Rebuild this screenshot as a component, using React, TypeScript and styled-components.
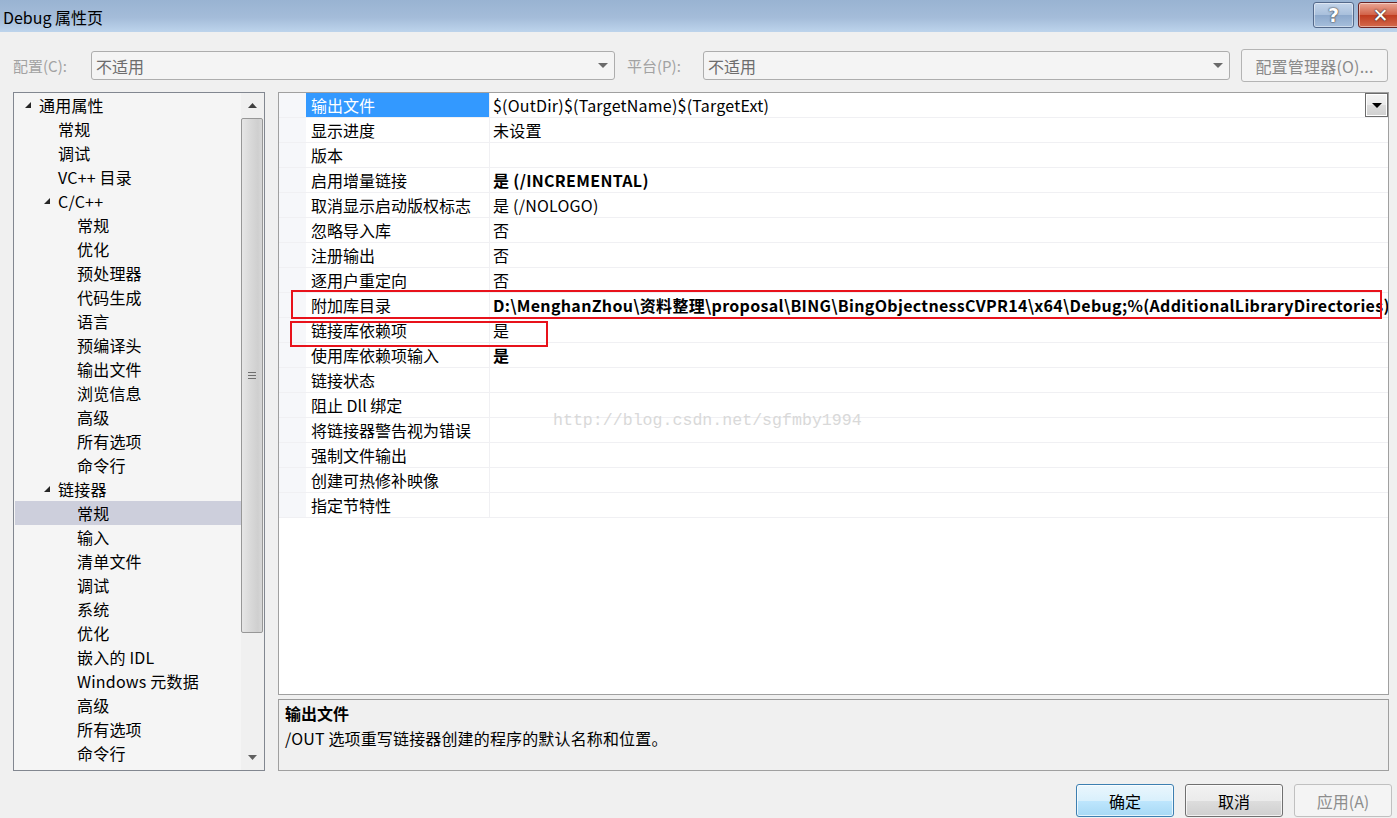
import React from 'react';
import styled, { createGlobalStyle } from 'styled-components';

const GlobalStyle = createGlobalStyle`
  html, body { margin: 0; padding: 0; background: #f0f0f0; }
  body {
    font-family: "Noto Sans CJK SC", "Microsoft YaHei", sans-serif;
    font-size: 16px;
    color: #000;
  }
  * { box-sizing: border-box; }
`;

const Window = styled.div`
  position: relative;
  width: 1397px;
  height: 818px;
  overflow: hidden;
  display: flex;
  flex-direction: column;
  background: #f0f0f0;
`;

const TitleBar = styled.div`
  height: 32px;
  flex: none;
  display: flex;
  align-items: flex-start;
  justify-content: space-between;
  background: linear-gradient(#99b3d2, #a4bcd9 55%, #bdd4ec);
  padding-left: 3px;
`;

const TitleText = styled.div`
  line-height: 34px;
  font-size: 16px;
  color: #000;
`;

const Captions = styled.div`
  display: flex;
  gap: 4px;
  margin-top: 2px;
  margin-right: -6px;
`;

const CaptionButton = styled.div<{ $kind: 'help' | 'close' }>`
  width: ${p => (p.$kind === 'help' ? 41 : 45)}px;
  height: 26px;
  border-radius: 3px;
  border: 1px solid ${p => (p.$kind === 'help' ? '#54698a' : '#6b2424')};
  box-shadow: inset 0 0 0 1px rgba(255,255,255,0.45);
  background: ${p =>
    p.$kind === 'help'
      ? 'linear-gradient(#c4d5ea, #a9c0dc 48%, #8da9cc 52%, #a6bfdc)'
      : 'linear-gradient(#e9a796, #d2644a 48%, #c03c20 52%, #d46a4c)'};
  display: flex;
  align-items: center;
  justify-content: center;
  color: #fff;
  font-family: "DejaVu Sans", sans-serif;
  font-weight: 700;
  font-size: 19px;
  text-shadow: 0 0 2px #333, 0 0 1px #333;
`;

const ConfigRow = styled.div`
  margin-top: 17px;
  height: 33px;
  flex: none;
  display: flex;
  align-items: center;
  padding-left: 13px;
`;

const ConfigLabel = styled.div<{ $w: number; $gap?: number }>`
  width: ${p => p.$w}px;
  margin-left: ${p => p.$gap ?? 0}px;
  color: #a2a2a2;
  font-size: 15px;
`;

const Combo = styled.div<{ $w: number }>`
  width: ${p => p.$w}px;
  height: 29px;
  border: 1px solid #adadad;
  border-radius: 3px;
  background: #f4f4f4;
  display: flex;
  align-items: center;
  justify-content: space-between;
  padding: 0 5px 0 4px;
  color: #6d6d6d;
  font-size: 16px;
`;

const ComboArrow = styled.div`
  width: 0;
  height: 0;
  border-left: 5px solid transparent;
  border-right: 5px solid transparent;
  border-top: 5px solid #6a6a6a;
  margin-right: 1px;
`;

const ManagerButton = styled.div`
  margin-left: 11px;
  width: 147px;
  height: 33px;
  border: 1px solid #b4b4b4;
  border-radius: 3px;
  background: #f4f4f4;
  color: #8a8a8a;
  display: flex;
  align-items: center;
  justify-content: center;
  font-size: 16px;
  letter-spacing: 0.2px;
`;

const Main = styled.div`
  margin-top: 10px;
  display: flex;
  gap: 13px;
  padding-left: 13px;
  flex: none;
`;

const Tree = styled.div`
  width: 252px;
  height: 679px;
  border: 1px solid #828790;
  background: #f5f5f5;
  display: flex;
  overflow: hidden;
`;

const TreeList = styled.div`
  flex: 1;
  padding-left: 1px;
`;

const TreeRow = styled.div<{ $level: number; $selected?: boolean }>`
  height: 24px;
  display: flex;
  align-items: center;
  padding-left: ${p => 8 + p.$level * 19}px;
  background: ${p => (p.$selected ? '#cdcfdc' : 'transparent')};
  white-space: nowrap;
  font-size: 16px;
  letter-spacing: 0.2px;
`;

const ArrowSlot = styled.div`
  width: 16px;
  height: 24px;
  display: flex;
  align-items: center;
  padding-left: 1px;
`;

const ScrollBar = styled.div`
  width: 23px;
  background: #f0f0f0;
  display: flex;
  flex-direction: column;
`;

const ScrollArrow = styled.div`
  height: 25px;
  display: flex;
  align-items: center;
  justify-content: center;
  flex: none;
`;

const ScrollThumb = styled.div`
  height: 515px;
  width: 22px;
  border: 1px solid #979797;
  border-radius: 2px;
  background: linear-gradient(90deg, #e6e6e6, #d8d8d8 45%, #cfcfcf 80%, #d8d8d8);
  display: flex;
  align-items: center;
  justify-content: center;
  flex: none;
`;

const Grip = styled.div`
  width: 8px;
  height: 7px;
  background: repeating-linear-gradient(#6f6f6f 0 1px, transparent 1px 3px);
`;

const ScrollTrack = styled.div`
  flex: 1;
`;

const RightCol = styled.div`
  width: 1111px;
  display: flex;
  flex-direction: column;
`;

const Grid = styled.div`
  position: relative;
  height: 603px;
  border: 1px solid #a0a0a0;
  background: #fff;
  overflow: hidden;
`;

const GridRow = styled.div`
  height: 25px;
  display: flex;
  border-bottom: 1px solid #f0f0f3;
`;

const Gutter = styled.div`
  width: 27px;
  flex: none;
  background: #f6f7fa;
`;

const NameCell = styled.div<{ $selected?: boolean }>`
  width: 184px;
  flex: none;
  padding-left: 5px;
  display: flex;
  align-items: center;
  border-right: 1px solid #f0f0f3;
  background: ${p => (p.$selected ? '#3399ff' : '#fff')};
  color: ${p => (p.$selected ? '#fff' : '#000')};
  white-space: nowrap;
  font-size: 16px;
`;

const ValueCell = styled.div<{ $bold?: boolean }>`
  flex: 1;
  padding-left: 3px;
  display: flex;
  align-items: center;
  justify-content: space-between;
  font-weight: ${p => (p.$bold ? 700 : 400)};
  letter-spacing: ${p => (p.$bold ? 0.32 : 0.22)}px;
  white-space: nowrap;
  overflow: visible;
  font-size: 16px;
`;

const DropButton = styled.div`
  width: 23px;
  height: 24px;
  border: 1px solid #6c6c6c;
  box-shadow: inset 0 0 0 1px #fff;
  background: linear-gradient(#f4f4f4, #ebebeb 50%, #dcdcdc 51%, #d0d0d0);
  display: flex;
  align-items: center;
  justify-content: center;
  flex: none;
`;

const DropTri = styled.div`
  width: 0;
  height: 0;
  border-left: 5px solid transparent;
  border-right: 5px solid transparent;
  border-top: 5px solid #000;
`;

const RedBox = styled.div<{ $l: number; $t: number; $w: number; $h: number }>`
  position: absolute;
  left: ${p => p.$l}px;
  top: ${p => p.$t}px;
  width: ${p => p.$w}px;
  height: ${p => p.$h}px;
  border: 2px solid #e8121b;
  pointer-events: none;
`;

const Watermark = styled.div`
  position: absolute;
  left: 274px;
  top: 318px;
  font-family: "Liberation Mono", "DejaVu Sans Mono", monospace;
  font-size: 16.6px;
  color: #d9d9d9;
  pointer-events: none;
`;

const Desc = styled.div`
  margin-top: 4px;
  height: 72px;
  border: 1px solid #a0a0a0;
  border-top-color: #9a9a9a;
  background: #f0f0f0;
  padding: 1px 6px;
`;

const DescTitle = styled.div`
  font-weight: 700;
  font-size: 16px;
  line-height: 24px;
`;

const DescText = styled.div`
  font-size: 16px;
  line-height: 26px;
  letter-spacing: 0.15px;
`;

const Footer = styled.div`
  margin-top: 13px;
  display: flex;
  justify-content: flex-end;
  gap: 11px;
  padding-right: 5px;
`;

const DialogButton = styled.div<{ $variant: 'primary' | 'normal' | 'disabled' }>`
  width: 98px;
  height: 33px;
  border-radius: 3px;
  display: flex;
  align-items: center;
  justify-content: center;
  font-size: 16px;
  border: 1px solid
    ${p => (p.$variant === 'primary' ? '#3c7fb1' : p.$variant === 'normal' ? '#707070' : '#c0c0c0')};
  box-shadow: ${p => (p.$variant === 'disabled' ? 'none' : 'inset 0 0 0 1px rgba(255,255,255,0.7)')};
  background: ${p =>
    p.$variant === 'primary'
      ? 'linear-gradient(#eaf6fd, #d9f0fc 50%, #bee6fd 51%, #a7d9f5)'
      : p.$variant === 'normal'
      ? 'linear-gradient(#f2f2f2, #ebebeb 50%, #dddddd 51%, #cfcfcf)'
      : '#f4f4f4'};
  color: ${p => (p.$variant === 'disabled' ? '#8d8d8d' : '#000')};
`;

const Tri = () => (
  <svg width="8" height="8" viewBox="0 0 8 8">
    <polygon points="7,1 7,7 1,7" fill="#262626" />
  </svg>
);

const UpTri = () => (
  <svg width="9" height="5" viewBox="0 0 9 5">
    <polygon points="0,5 9,5 4.5,0" fill="#404040" />
  </svg>
);

const DownTri = () => (
  <svg width="9" height="5" viewBox="0 0 9 5">
    <polygon points="0,0 9,0 4.5,5" fill="#606060" />
  </svg>
);

type TreeItem = { label: string; level: number; expanded?: boolean; selected?: boolean };

const treeItems: TreeItem[] = [
  { label: '通用属性', level: 0, expanded: true },
  { label: '常规', level: 1 },
  { label: '调试', level: 1 },
  { label: 'VC++ 目录', level: 1 },
  { label: 'C/C++', level: 1, expanded: true },
  { label: '常规', level: 2 },
  { label: '优化', level: 2 },
  { label: '预处理器', level: 2 },
  { label: '代码生成', level: 2 },
  { label: '语言', level: 2 },
  { label: '预编译头', level: 2 },
  { label: '输出文件', level: 2 },
  { label: '浏览信息', level: 2 },
  { label: '高级', level: 2 },
  { label: '所有选项', level: 2 },
  { label: '命令行', level: 2 },
  { label: '链接器', level: 1, expanded: true },
  { label: '常规', level: 2, selected: true },
  { label: '输入', level: 2 },
  { label: '清单文件', level: 2 },
  { label: '调试', level: 2 },
  { label: '系统', level: 2 },
  { label: '优化', level: 2 },
  { label: '嵌入的 IDL', level: 2 },
  { label: 'Windows 元数据', level: 2 },
  { label: '高级', level: 2 },
  { label: '所有选项', level: 2 },
  { label: '命令行', level: 2 },
];

type Prop = { name: string; value: string; bold?: boolean; selected?: boolean };

const props: Prop[] = [
  { name: '输出文件', value: '$(OutDir)$(TargetName)$(TargetExt)', selected: true },
  { name: '显示进度', value: '未设置' },
  { name: '版本', value: '' },
  { name: '启用增量链接', value: '是 (/INCREMENTAL)', bold: true },
  { name: '取消显示启动版权标志', value: '是 (/NOLOGO)' },
  { name: '忽略导入库', value: '否' },
  { name: '注册输出', value: '否' },
  { name: '逐用户重定向', value: '否' },
  {
    name: '附加库目录',
    value: 'D:\\MenghanZhou\\资料整理\\proposal\\BING\\BingObjectnessCVPR14\\x64\\Debug;%(AdditionalLibraryDirectories)',
    bold: true,
  },
  { name: '链接库依赖项', value: '是' },
  { name: '使用库依赖项输入', value: '是', bold: true },
  { name: '链接状态', value: '' },
  { name: '阻止 Dll 绑定', value: '' },
  { name: '将链接器警告视为错误', value: '' },
  { name: '强制文件输出', value: '' },
  { name: '创建可热修补映像', value: '' },
  { name: '指定节特性', value: '' },
];

export default function App() {
  return (
    <>
      <GlobalStyle />
      <Window>
        <TitleBar>
          <TitleText>Debug 属性页</TitleText>
          <Captions>
            <CaptionButton $kind="help">?</CaptionButton>
            <CaptionButton $kind="close">✕</CaptionButton>
          </Captions>
        </TitleBar>

        <ConfigRow>
          <ConfigLabel $w={78}>配置(C):</ConfigLabel>
          <Combo $w={524}>
            <span>不适用</span>
            <ComboArrow />
          </Combo>
          <ConfigLabel $w={76} $gap={12}>平台(P):</ConfigLabel>
          <Combo $w={527}>
            <span>不适用</span>
            <ComboArrow />
          </Combo>
          <ManagerButton>配置管理器(O)...</ManagerButton>
        </ConfigRow>

        <Main>
          <Tree>
            <TreeList>
              {treeItems.map((it, i) => (
                <TreeRow key={i} $level={it.level} $selected={it.selected}>
                  <ArrowSlot>{it.expanded ? <Tri /> : null}</ArrowSlot>
                  {it.label}
                </TreeRow>
              ))}
            </TreeList>
            <ScrollBar>
              <ScrollArrow>
                <UpTri />
              </ScrollArrow>
              <ScrollThumb>
                <Grip />
              </ScrollThumb>
              <ScrollTrack />
              <ScrollArrow>
                <DownTri />
              </ScrollArrow>
            </ScrollBar>
          </Tree>

          <RightCol>
            <Grid>
              {props.map((p, i) => (
                <GridRow key={i}>
                  <Gutter />
                  <NameCell $selected={p.selected}>{p.name}</NameCell>
                  <ValueCell $bold={p.bold}>
                    <span>{p.value}</span>
                    {p.selected ? (
                      <DropButton>
                        <DropTri />
                      </DropButton>
                    ) : null}
                  </ValueCell>
                </GridRow>
              ))}
              <RedBox $l={12} $t={197} $w={1091} $h={29} />
              <RedBox $l={11} $t={228} $w={258} $h={26} />
              <Watermark>http://blog.csdn.net/sgfmby1994</Watermark>
            </Grid>
            <Desc>
              <DescTitle>输出文件</DescTitle>
              <DescText>/OUT 选项重写链接器创建的程序的默认名称和位置。</DescText>
            </Desc>
          </RightCol>
        </Main>

        <Footer>
          <DialogButton $variant="primary">确定</DialogButton>
          <DialogButton $variant="normal">取消</DialogButton>
          <DialogButton $variant="disabled">应用(A)</DialogButton>
        </Footer>
      </Window>
    </>
  );
}
